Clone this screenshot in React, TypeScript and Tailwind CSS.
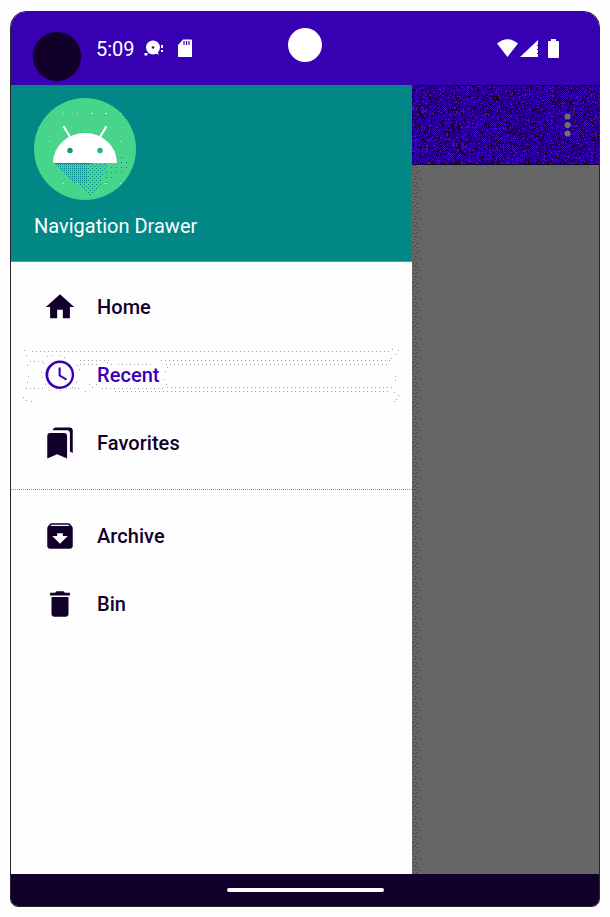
import React from "react";

const HIGHLIGHT: [number, number, number, number][] = [
  [32, 351.5, 392, 351.5],
  [80, 360.5, 112, 360.5],
  [161, 360.5, 392, 360.5],
  [30, 361.5, 46, 361.5],
  [80, 364.5, 98, 364.5],
  [118, 364.5, 152, 364.5],
  [166, 364.5, 390, 364.5],
  [26, 388.5, 46, 388.5],
  [62, 388.5, 82, 388.5],
  [102, 388.5, 164, 388.5],
  [167, 387.5, 392, 387.5],
  [115, 391.5, 390, 391.5],
];

const SPECKS: [number, number][] = [
  [24, 350], [26, 355], [27, 365], [28, 376], [27, 382], [23, 397], [26, 400], [31, 401],
  [392, 349], [395, 354], [398, 350], [391, 358], [395, 376], [395, 380], [394, 392], [398, 395], [396, 399], [394, 401],
  [47, 356], [51, 355], [59, 355], [64, 357], [43, 363], [41, 372], [42, 377], [45, 384], [76, 382], [79, 369], [77, 365],
  [49, 390], [60, 390], [85, 391], [89, 384], [92, 387], [96, 384], [165, 371], [167, 367], [163, 379], [166, 384],
  [107, 362], [111, 364], [72, 387],
];

const GRAIN_W = 187;
const GRAIN_H = 78;

function ditherPaths() {
  let seed = 7331;
  const rand = () => {
    seed = (seed * 1103515245 + 12345) % 2147483648;
    return seed / 2147483648;
  };
  let blue = "";
  let gray = "";
  for (let y = 0; y < GRAIN_H; y++) {
    for (let x = 0; x < GRAIN_W; x++) {
      const even = (x + y) % 2 === 0;
      const r = rand();
      if (even ? r < 0.8 : r < 0.12) blue += `M${x} ${y}h1v1h-1z`;
      else if (rand() < 0.13) gray += `M${x} ${y}h1v1h-1z`;
    }
  }
  return { blue, gray };
}

const GRAIN = ditherPaths();

function MenuIcon({ d }: { d: string }) {
  return (
    <svg viewBox="0 0 24 24" className="h-[34px] w-[34px] shrink-0" fill="currentColor">
      <path d={d} />
    </svg>
  );
}

function MenuRow({ label, d, active = false }: { label: string; d: string; active?: boolean }) {
  return (
    <div className={`flex h-[68px] items-center gap-5 pl-8 ${active ? "text-[#3700b3]" : "text-[#12002b]"}`}>
      <MenuIcon d={d} />
      <span className="text-[20px] leading-6 font-medium tracking-[0.05px]">{label}</span>
    </div>
  );
}

function Avatar() {
  return (
    <svg viewBox="34 98 102 102" className="h-[102px] w-[102px]">
      <defs>
        <pattern id="shade" width="2" height="2" patternUnits="userSpaceOnUse">
          <rect width="1" height="1" fill="#008786" />
        </pattern>
        <pattern id="shadeLight" width="4" height="4" patternUnits="userSpaceOnUse">
          <rect width="1" height="1" fill="#008786" />
          <rect x="2" y="2" width="1" height="1" fill="#008786" />
        </pattern>
        <pattern id="shadeFaint" width="5" height="5" patternUnits="userSpaceOnUse">
          <rect x="1" y="2" width="1" height="1" fill="#008786" />
        </pattern>
      </defs>
      <circle cx="85" cy="149" r="51" fill="#48d48a" />
      <g stroke="#9cb5a8" strokeWidth="1" strokeDasharray="1 2" shapeRendering="crispEdges">
        <path d="M38 127.5H131M38 155.5H52M118 155.5H132M49.500 127V170M77.500 164V180M120.500 127V134" opacity=".7" />
      </g>
      <g fill="#d5eadd">
        <path d="M63 113h1v1h-1zM77 113h1v1h-1zM49 141h1v1h-1zM63 183h1v1h-1zM77 183h1v1h-1zM91 113h2v1h-2zM105 113h2v1h-2zM120 113h1v1h-1zM120 141h1v1h-1zM105 183h2v1h-2zM120 183h1v1h-1z" />
      </g>
      <g shapeRendering="crispEdges">
        <path d="M54 163H88V183H74Z" fill="url(#shade)" />
        <path d="M88 163H108L100 183H88Z" fill="url(#shadeLight)" />
        <path d="M78 184H102L90 196Z" fill="url(#shadeLight)" />
        <path d="M108 163L118 152L128 160V168L104 186Z" fill="url(#shadeFaint)" />
      </g>
      <path d="M53 163a32 30 0 0 1 64 0Z" fill="white" />
      <path d="M54 163.5H92" stroke="#1c9585" />
      <path d="M64 127L70 137M106 127L100 137" stroke="white" strokeWidth="2.200" strokeLinecap="round" />
      <circle cx="70" cy="150.500" r="2.700" fill="#158f7f" />
      <circle cx="100" cy="150.500" r="2.700" fill="#2aab84" />
    </svg>
  );
}

function StatusBar() {
  return (
    <div className="relative flex h-[73px] items-start bg-[#3700b3] text-white">
      <div className="mt-[20px] ml-[22px] h-[49px] w-[48px] rounded-full bg-[#12002b]" />
      <span className="mt-[25px] ml-[15px] w-[48px] text-[20px] leading-6">5:09</span>
      <svg viewBox="144 38 20 20" className="mt-[26px] h-5 w-5" fill="white">
        <circle cx="153" cy="47.500" r="7" />
        <path d="M144.500 53h3v2.500h-3zM161 45h2v3h-2zM161 50h2v2h-2z" />
        <path d="M155 53l4 2-2-4z" />
        <circle cx="153" cy="47.500" r="1.300" fill="#3700b3" />
      </svg>
      <svg viewBox="177 38 16 20" className="mt-[26px] ml-[13px] h-5 w-4">
        <path d="M178 45l5-5.500h8q1 0 1 1V57h-14z" fill="white" />
        <path d="M184 41v4M186.500 41v4M189 41v4" stroke="#3700b3" strokeWidth="1.200" />
      </svg>
      <div className="absolute top-4 left-[277px] h-[34px] w-[34px] rounded-full bg-white" />
      <svg viewBox="496 37 65 22" className="mt-[25px] mr-[38px] ml-auto h-[22px] w-[65px]" fill="white">
        <path d="M497 43.500q10.500-8.500 21 0L507.500 57zM520 57L538 40V57zM548 42q0-1 1-1h2v-2h5v2h2q1 0 1 1v15q0 1-1 1h-9q-1 0-1-1z" />
        <path d="M537.500 45v10" stroke="#3700b3" strokeDasharray="1 3" />
      </svg>
    </div>
  );
}

function Drawer() {
  return (
    <aside className="relative w-[401px] shrink-0 bg-[#fefefe]">
      <header className="h-[177px] border-b border-[#31b889] bg-[#008786] pt-[13px] pl-[23px] text-white">
        <Avatar />
        <div className="mt-[14px] text-[20px] leading-6">Navigation Drawer</div>
      </header>
      <nav>
        <div className="py-[11px]">
          <MenuRow label="Home" d="M10 20v-6h4v6h5v-8h3L12 3 2 12h3v8z" />
          <MenuRow active label="Recent" d="M11.990 1.700C6.470 1.700 1.700 6.200 1.700 11.700s4.470 10.200 10.200 10.200C17.520 21.900 22 17.300 22 11.700S17.520 1.700 11.990 1.700zM12 20.100a8.300 8.300 0 1 1 0-16.600a8.300 8.300 0 0 1 0 16.600zM12.500 6.700H11v6l5.250 3.150.75-1.230-4.500-2.670z" />
          <MenuRow label="Favorites" d="m19 18 2 1V3c0-1.100-.9-2-2-2H8.990C7.890 1 7 1.900 7 3h10c1.100 0 2 .9 2 2v13zM15 5H5c-1.100 0-2 .9-2 2v16l7-3 7 3V7c0-1.100-.9-2-2-2z" />
        </div>
        <div className="mt-[1px] border-t border-dotted border-[#9090a8]" />
        <div className="pt-[12px]">
          <MenuRow label="Archive" d="m20.540 5.230-1.390-1.680C18.880 3.210 18.470 3 18 3H6c-.47 0-.88.21-1.160.55L3.460 5.230C3.170 5.570 3 6.020 3 6.500V19c0 1.100.9 2 2 2h14c1.100 0 2-.9 2-2V6.500c0-.48-.17-.93-.46-1.270zM12 17.500 6.500 12H10v-2h4v2h3.500L12 17.500zM5.120 5l.81-1h12l.94 1H5.120z" />
          <MenuRow label="Bin" d="M6 19c0 1.100.9 2 2 2h8c1.100 0 2-.9 2-2V7H6v12zM19 4h-3.500l-1-1h-5l-1 1H5v2h14V4z" />
        </div>
      </nav>
      <svg className="pointer-events-none absolute top-[260px] left-0 h-[62px] w-[401px]" viewBox="11 345 401 62" shapeRendering="crispEdges">
        {HIGHLIGHT.map(([x1, y1, x2, y2], i) => (
          <line key={i} x1={x1} y1={y1} x2={x2} y2={y2} stroke="#a4a2b4" strokeDasharray="1 3" />
        ))}
        {SPECKS.map(([x, y], i) => (
          <rect key={i} x={x} y={y} width="1" height="1" fill="#a4a2b4" />
        ))}
      </svg>
    </aside>
  );
}

function AppBehind() {
  return (
    <main className="flex min-w-0 flex-1 flex-col bg-[#666666]">
      <svg className="h-[80px] w-full" viewBox="0 0 187 80" shapeRendering="crispEdges">
        <rect width="187" height="80" fill="#12002b" />
        <g transform="translate(0 1)">
          <path d={GRAIN.blue} fill="#3700b3" />
          <path d={GRAIN.gray} fill="#35383f" />
        </g>
        <g fill="#707070" shapeRendering="auto">
          <circle cx="155.500" cy="31.500" r="3.100" />
          <circle cx="155.500" cy="40" r="3.100" />
          <circle cx="155.500" cy="48.500" r="3.100" />
        </g>
      </svg>
      <svg className="w-[10px] flex-1" shapeRendering="crispEdges">
        <defs>
          <pattern id="edge" width="10" height="20" patternUnits="userSpaceOnUse">
            <path d="M1 1h1v1h-1zM3 0h1v1h-1zM5 2h1v1h-1zM2 4h1v1h-1zM7 5h1v1h-1zM4 7h1v1h-1zM1 8h1v1h-1zM3 11h1v1h-1zM8 13h1v1h-1zM5 12h1v1h-1zM2 14h1v1h-1zM1 17h1v1h-1zM4 18h1v1h-1z" fill="#35383a" />
          </pattern>
        </defs>
        <rect width="100%" height="100%" fill="url(#edge)" />
      </svg>
    </main>
  );
}

export default function App() {
  return (
    <div className="h-[917px] w-[610px] overflow-hidden bg-[#fefefe] pt-[11px] pl-[10px] font-[Roboto,sans-serif]">
      <div className="flex h-[896px] w-[590px] flex-col overflow-hidden rounded-t-[16px] rounded-b-[8px] border border-[#25252d]">
        <StatusBar />
        <div className="flex h-[789px]">
          <Drawer />
          <AppBehind />
        </div>
        <div className="flex h-8 justify-center bg-[#12002b] pt-[14px]">
          <div className="h-1 w-[157px] rounded-full bg-white" />
        </div>
      </div>
    </div>
  );
}
